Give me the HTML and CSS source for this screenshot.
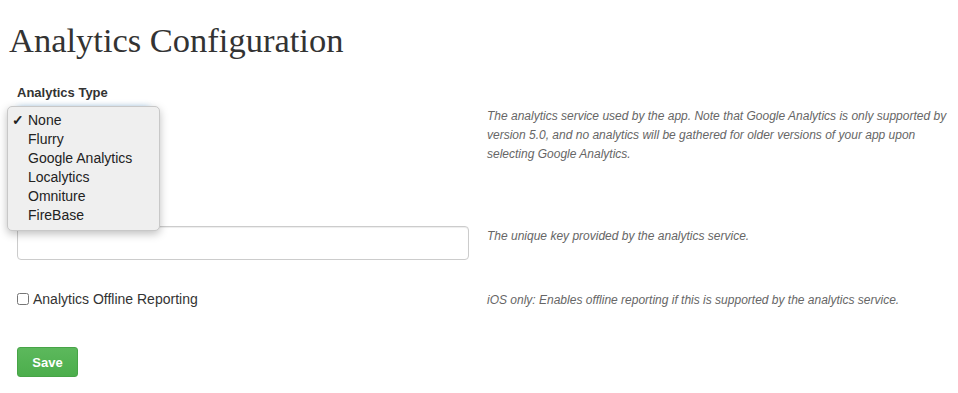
FILE: index.html
```html
<!DOCTYPE html>
<html lang="en">
<head>
    <meta charset="UTF-8">
    <title>Analytics Configuration</title>
    <link rel="stylesheet" href="styles.css">
</head>
<body>

<div class="page">
    <h1>Analytics Configuration</h1>

    <form class="config-form">
        <div class="row row-type">
            <div class="field">
                <label class="field-label" for="analyticsType">Analytics Type</label>
                <div class="select-wrap">
                    <div class="select-box" id="analyticsType"></div>
                    <ul class="dropdown">
                        <li class="selected"><span class="check">&#10003;</span>None</li>
                        <li>Flurry</li>
                        <li>Google Analytics</li>
                        <li>Localytics</li>
                        <li>Omniture</li>
                        <li>FireBase</li>
                    </ul>
                </div>
            </div>
            <p class="help">The analytics service used by the app. Note that Google Analytics is only supported by version 5.0, and no analytics will be gathered for older versions of your app upon selecting Google Analytics.</p>
        </div>

        <div class="row row-key">
            <div class="field">
                <!-- label sits under the open dropdown -->
                <input type="text" id="analyticsKey" class="text-input" aria-label="Analytics Key">
            </div>
            <p class="help">The unique key provided by the analytics service.</p>
        </div>

        <div class="row row-offline">
            <div class="field">
                <label class="check-label"><input type="checkbox" class="checkbox"> Analytics Offline Reporting</label>
            </div>
            <p class="help">iOS only: Enables offline reporting if this is supported by the analytics service.</p>
        </div>

        <button type="button" class="btn-save">Save</button>
    </form>
</div>

</body>
</html>
```

FILE: styles.css
```css
body {
    margin: 0;
    font-family: 'Liberation Sans', Arial, sans-serif;
    color: #333;
    background-color: #fff;
}
.page {
    padding: 0 9px;
}
h1 {
    font-family: 'Liberation Serif', 'Times New Roman', serif;
    font-weight: normal;
    font-size: 34.5px;
    color: #333;
    margin: 0;
    padding-top: 20px;
    line-height: 40px;
}
.config-form {
    padding-left: 8px;
    margin-top: 25px;
}
.row {
    display: grid;
    grid-template-columns: 452px 1fr;
    column-gap: 18px;
}
.field-label {
    display: block;
    font-size: 13px;
    font-weight: bold;
    margin-bottom: 7px;
}
.select-wrap {
    position: relative;
}
.select-box {
    width: 133px;
    height: 30px;
    border: 1px solid #66afe9;
    border-radius: 4px;
    box-shadow: 0 0 6px rgba(102, 175, 233, 0.6);
    box-sizing: border-box;
}
.dropdown {
    position: absolute;
    top: -1px;
    left: -10px;
    width: 153px;
    margin: 0;
    padding: 4px 0 5px;
    list-style: none;
    background-color: #efefef;
    border: 1px solid #c8c8c8;
    border-radius: 5px;
    box-shadow: 0 3px 8px rgba(0, 0, 0, 0.25);
    box-sizing: border-box;
}
.dropdown li {
    position: relative;
    font-size: 14px;
    line-height: 19px;
    padding-left: 20px;
    color: #222;
}
.dropdown .check {
    position: absolute;
    left: 4px;
    font-size: 14px;
    font-weight: bold;
}
.help {
    margin: 0;
    font-size: 12px;
    font-style: italic;
    line-height: 19px;
    color: #666;
}
.row-type .help {
    padding-top: 22px;
}
.row-key {
    margin-top: 62px;
}
.row-key .help {
    padding-top: 1px;
}
.text-input {
    display: block;
    width: 100%;
    height: 34px;
    border: 1px solid #ccc;
    border-radius: 4px;
    box-sizing: border-box;
    box-shadow: inset 0 1px 1px rgba(0, 0, 0, 0.075);
}
.row-offline {
    margin-top: 31px;
}
.check-label {
    font-size: 14px;
    display: flex;
    align-items: center;
    gap: 4px;
}
.checkbox {
    margin: 0;
    width: 12px;
    height: 12px;
}
.btn-save {
    margin-top: 37px;
    background: linear-gradient(#5cb85c, #4cae4c);
    border: 1px solid #47a447;
    border-radius: 3px;
    color: #fff;
    font-family: 'Liberation Sans', Arial, sans-serif;
    font-weight: bold;
    font-size: 13px;
    width: 61px;
    height: 30px;
    cursor: pointer;
}
```
